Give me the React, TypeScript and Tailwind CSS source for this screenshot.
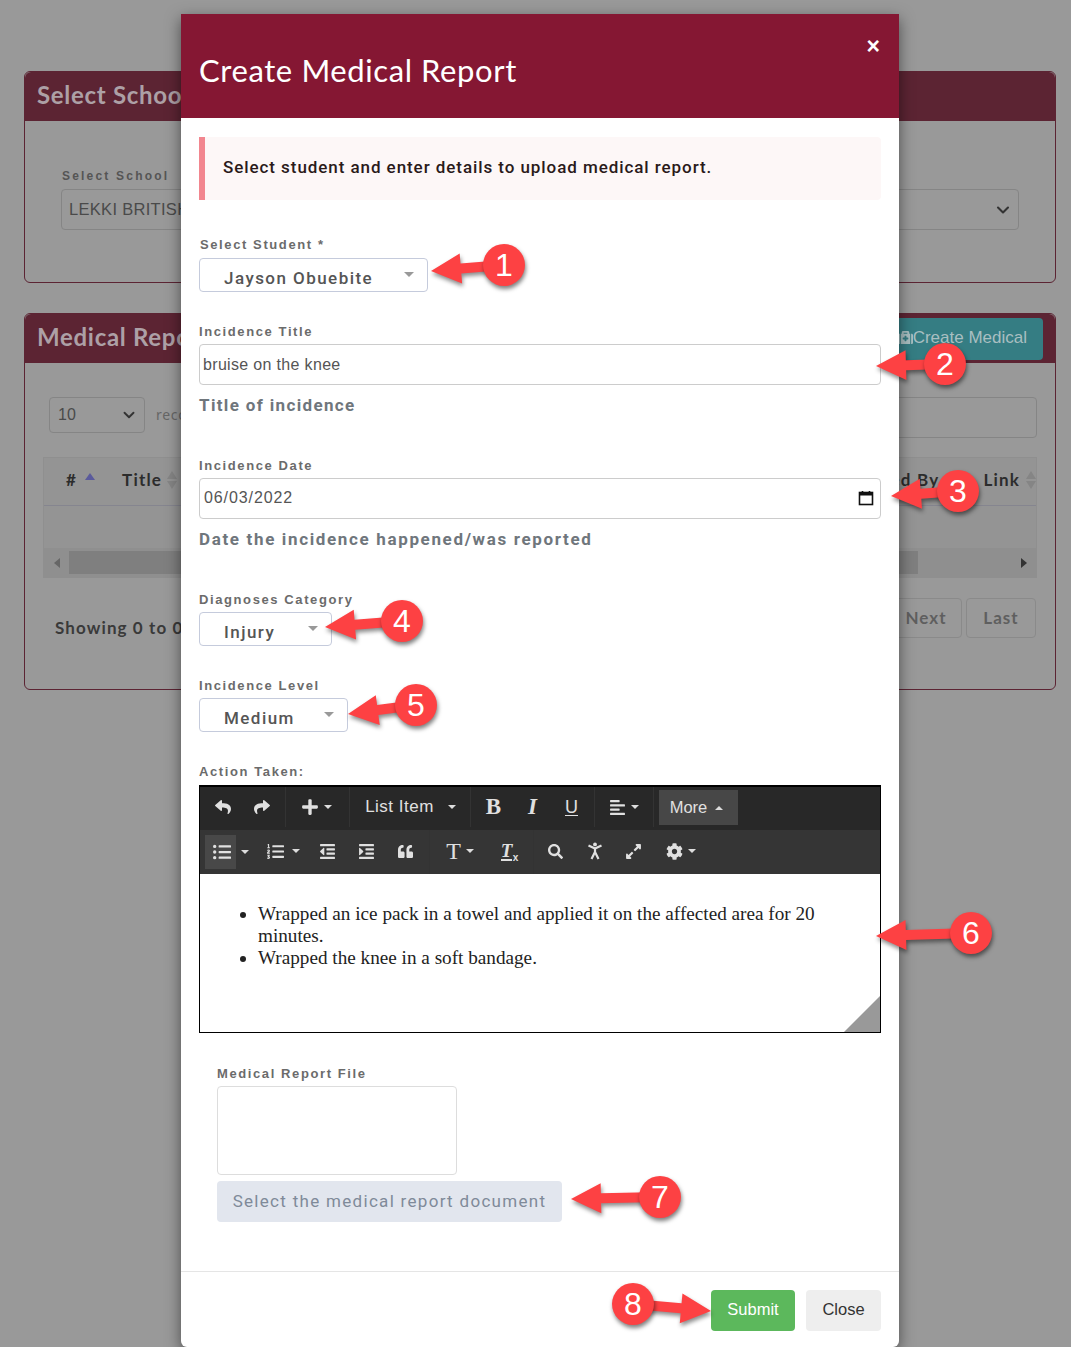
import type { ReactNode } from 'react';
import { ChevronDown } from 'lucide-react';
import {
  FaAlignLeft,
  FaCog,
  FaExpandAlt,
  FaIndent,
  FaListOl,
  FaListUl,
  FaMedkit,
  FaOutdent,
  FaPlus,
  FaQuoteLeft,
  FaReply,
  FaSearch,
  FaShare,
} from 'react-icons/fa';

const callouts = [
  { n: '1', tipX: 431, tipY: 271, cx: 504, cy: 265 },
  { n: '2', tipX: 876, tipY: 366, cx: 945, cy: 364 },
  { n: '3', tipX: 891, tipY: 496, cx: 958, cy: 491 },
  { n: '4', tipX: 325, tipY: 627, cx: 402, cy: 621 },
  { n: '5', tipX: 348, tipY: 714, cx: 416, cy: 705 },
  { n: '6', tipX: 876, tipY: 936, cx: 971, cy: 933 },
  { n: '7', tipX: 571, tipY: 1199, cx: 660, cy: 1197 },
  { n: '8', tipX: 711, tipY: 1311, cx: 633, cy: 1304 },
];

function arrowPoints(tipX: number, tipY: number, cx: number, cy: number) {
  const len = Math.hypot(cx - tipX, cy - tipY);
  const ux = (cx - tipX) / len;
  const uy = (cy - tipY) / len;
  const at = (along: number, side: number) =>
    `${tipX + ux * along - uy * side},${tipY + uy * along + ux * side}`;
  return [at(0, 0), at(30, 15), at(30, 5), at(len, 5), at(len, -5), at(30, -5), at(30, -15)].join(' ');
}

function Callouts() {
  return (
    <>
      <svg className="absolute left-0 top-0 drop-shadow-[1px_3px_2px_rgba(0,0,0,0.45)]" width="1071" height="1347">
        {callouts.map((c) => (
          <polygon key={c.n} points={arrowPoints(c.tipX, c.tipY, c.cx, c.cy)} fill="#fd4143" />
        ))}
      </svg>
      {callouts.map((c) => (
        <div
          key={c.n}
          className="absolute flex h-[42px] w-[42px] items-center justify-center rounded-full bg-[#fd4143] text-[32px] text-white shadow-[1px_3px_4px_rgba(0,0,0,0.5)] [font-family:'Liberation_Sans',sans-serif]"
          style={{ left: c.cx - 21, top: c.cy - 21 }}
        >
          {c.n}
        </div>
      ))}
    </>
  );
}

function SortIcons() {
  return (
    <span className="flex flex-col gap-[2px]">
      <span className="h-0 w-0 border-x-[5px] border-b-[8px] border-x-transparent border-b-[#858585]" />
      <span className="h-0 w-0 border-x-[5px] border-t-[8px] border-x-transparent border-t-[#858585]" />
    </span>
  );
}

function Background() {
  const head = "text-[24px] font-bold tracking-[0.7px] text-[#ada0a6] [font-family:Lato,sans-serif]";
  return (
    <div className="pl-6 pr-[15px] pt-[71px]">
      <div className="h-[212px] rounded-md border border-[#5c2433]">
        <div className="flex h-[49px] items-center rounded-t-md bg-[#5c2433] pb-1 pl-3">
          <span className={head}>Select School</span>
        </div>
        <div className="px-9 pt-[47px]">
          <div className="ml-px text-xs font-bold tracking-[2.2px] text-[#555] [font-family:'Liberation_Sans',sans-serif]">Select School</div>
          <div className="mt-[5px] flex h-[41px] w-[958px] items-center justify-between rounded border border-[#858585] pl-[7px] pr-[5px] text-[16.5px] tracking-[0.3px] text-[#4a4a4a] [font-family:'Liberation_Sans',sans-serif]">
            LEKKI BRITISH
            <ChevronDown size={20} strokeWidth={2.5} className="text-[#333]" />
          </div>
        </div>
      </div>
      <div className="mt-[30px] h-[377px] rounded-md border border-[#5c2433]">
        <div className="flex h-[49px] items-center justify-between rounded-t-md bg-[#5c2433] pl-3 pr-3">
          <span className={`${head} pb-1`}>Medical Reports</span>
          <div className="flex h-[42px] w-[153px] items-center justify-end rounded bg-[#357d83] pb-[2px] pr-4 text-[17px] text-[#a9bfc1] [font-family:'Liberation_Sans',sans-serif]">
            <FaMedkit size={15} />
            Create Medical
          </div>
        </div>
        <div className="px-[18px] pt-[34px]">
          <div className="flex items-start justify-between pl-1.5">
            <div className="flex items-center gap-[11px]">
              <div className="flex h-9 w-24 items-center justify-between rounded border border-[#858585] pl-2 pr-1.5 text-[16px] text-[#4a4a4a] [font-family:'Liberation_Sans',sans-serif]">
                10
                <ChevronDown size={18} strokeWidth={2.5} className="text-[#333]" />
              </div>
              <span className="text-sm tracking-wider text-[#666]">records</span>
            </div>
            <div className="h-[41px] w-[300px] rounded border border-[#858585]" />
          </div>
          <div className="mt-[19px] h-[121px] w-[994px] border border-[#8f8f8f] bg-[#949494]">
            <div className="flex h-[48px] items-center justify-between border-b border-[#85858f] pb-[3px] pl-[22px] pr-0 text-[17px] font-bold tracking-[1.2px] text-[#2c2c2c] [font-family:Lato,sans-serif]">
              <span className="flex items-center gap-[27px]">
                <span className="flex items-center gap-[8px]">
                  #
                  <span className="mb-2 h-0 w-0 border-x-[5px] border-b-[7px] border-x-transparent border-b-[#5a5a9c]" />
                </span>
                <span className="flex items-center gap-[5px]">Title <SortIcons /></span>
              </span>
              <span className="flex items-center gap-[44px]">
                <span>Uploaded By</span>
                <span className="flex items-center gap-[6px]">Link <SortIcons /></span>
              </span>
            </div>
            <div className="h-[42px]" />
            <div className="flex h-[29px] items-center bg-[#8f8f8f]">
              <span className="flex w-[25px] justify-center">
                <span className="h-0 w-0 border-y-[5px] border-r-[6px] border-y-transparent border-r-[#666]" />
              </span>
              <div className="h-[23px] w-[849px] bg-[#7f7f7f]" />
              <span className="ml-auto flex w-[25px] justify-center">
                <span className="h-0 w-0 border-y-[5px] border-l-[6px] border-y-transparent border-l-[#333]" />
              </span>
            </div>
          </div>
          <div className="mt-5 flex items-start justify-between pl-3 pr-px">
            <span className="pt-[17px] text-[17px] font-bold tracking-[1.1px] text-[#3a3a3a] [font-family:Lato,sans-serif]">Showing 0 to 0</span>
            <div className="flex gap-1 text-[17px] font-bold tracking-[1px] text-[#5f5f5f] [font-family:Lato,sans-serif]">
              <span className="flex h-10 w-[76px] items-center justify-center rounded-sm border border-[#8a8a8a] pl-1">Next</span>
              <span className="flex h-10 w-[70px] items-center justify-center rounded-sm border border-[#8a8a8a]">Last</span>
            </div>
          </div>
        </div>
      </div>
    </div>
  );
}

function Label({ children, className = '' }: { children: ReactNode; className?: string }) {
  return (
    <div className={`text-[13px] font-bold leading-[14px] tracking-[1.6px] text-[#6b6b6b] [font-family:'Liberation_Sans',sans-serif] ${className}`}>
      {children}
    </div>
  );
}

function SelectButton({ value, width }: { value: string; width: string }) {
  return (
    <div className={`relative flex h-[34px] items-center rounded border border-[#c5cbdc] pl-6 pt-2 text-[17px] font-medium tracking-[1.45px] text-[#555] [font-family:Roboto,sans-serif] ${width}`}>
      {value}
      <span className="absolute right-[13px] top-[13px] h-0 w-0 border-x-[5px] border-t-[5px] border-x-transparent border-t-[#999]" />
    </div>
  );
}

function HelpText({ children, className }: { children: ReactNode; className: string }) {
  return <div className={`text-[17px] font-bold leading-5 text-[#6f767c] [font-family:Roboto,sans-serif] ${className}`}>{children}</div>;
}

function Caret() {
  return <span className="h-0 w-0 border-x-[4px] border-t-[4px] border-x-transparent border-t-[#ddd]" />;
}

function Tool({ children, className = 'w-[39px]' }: { children: ReactNode; className?: string }) {
  return <div className={`flex h-full shrink-0 items-center justify-center gap-[5px] text-[#e0e0e0] ${className}`}>{children}</div>;
}

function Sep() {
  return <div className="h-full w-px shrink-0 bg-[#333]" />;
}

function Editor() {
  const serif = "[font-family:'Liberation_Serif',serif]";
  return (
    <div className="mt-[6px] h-[248px] w-[682px] border border-t-2 border-black">
      <div className="flex h-[43px] items-stretch bg-[#282828] pb-[3px] pl-[3px] pr-0">
        <Tool><FaReply size={16} /></Tool>
        <Tool><FaShare size={16} /></Tool>
        <div className="w-[4px]" />
        <Sep />
        <Tool className="w-[63px] pr-[3px]"><FaPlus size={18} /><Caret /></Tool>
        <Sep />
        <Tool className="w-[120px] pl-px text-[17px] tracking-[0.5px] [font-family:'Liberation_Sans',sans-serif]">
          <span className="mr-[9px]">List Item</span><Caret />
        </Tool>
        <Sep />
        <div className="w-[3px]" />
        <Tool><span className={`text-[23px] font-bold ${serif}`}>B</span></Tool>
        <Tool><span className={`text-[23px] font-bold italic ${serif}`}>I</span></Tool>
        <Tool><span className="text-[18px] underline underline-offset-2 [font-family:'Liberation_Sans',sans-serif]">U</span></Tool>
        <div className="w-[3px]" />
        <Sep />
        <Tool className="w-[58px]"><FaAlignLeft size={17} /><Caret /></Tool>
        <Sep />
        <div className="ml-[5px] mt-[3px] flex h-[35px] w-[79px] items-center justify-center gap-2 bg-[#474747] pr-1 text-[16.5px] text-[#e0e0e0] [font-family:'Liberation_Sans',sans-serif]">
          More
          <span className="h-0 w-0 border-x-[4px] border-b-[4px] border-x-transparent border-b-[#ddd]" />
        </div>
      </div>
      <div className="flex h-[44px] items-stretch bg-[#353535] pl-[5px]">
        <div className="my-[5px] flex w-[31px] items-center justify-center bg-[#484848] pl-[3px] text-[#e0e0e0]"><FaListUl size={18} /></div>
        <Tool className="w-[18px]"><Caret /></Tool>
        <Tool className="w-[54px] gap-[8px] pb-[2px] pl-[4px]"><FaListOl size={17} /><Caret /></Tool>
        <Tool className="w-[39px] pb-[2px]"><FaOutdent size={17} /></Tool>
        <Tool className="w-[39px] pb-[2px]"><FaIndent size={17} /></Tool>
        <Tool className="w-[39px] pb-[2px]"><FaQuoteLeft size={15} /></Tool>
        <div className="w-[4px]" />
        <Sep />
        <Tool className="w-[60px] pb-[2px]"><span className={`text-[24px] leading-none ${serif}`}>T</span><Caret /></Tool>
        <Tool className="w-[43px] pb-[2px] pr-[10px]">
          <span className={`relative border-b-2 border-[#e0e0e0] text-[19px] font-bold italic leading-[17px] ${serif}`}>
            T<span className="absolute -right-[6px] bottom-[-4px] text-[10px] not-italic leading-none [font-family:'Liberation_Sans',sans-serif]">x</span>
          </span>
        </Tool>
        <Sep />
        <div className="w-[2px]" />
        <Tool className="w-[39px] pb-[2px]"><FaSearch size={15} /></Tool>
        <Tool className="w-[39px] pb-[2px]">
          <svg width="16" height="18" viewBox="0 0 16 18" fill="none" stroke="currentColor" strokeWidth="2.2">
            <circle cx="8" cy="2.4" r="1.9" fill="currentColor" stroke="none" />
            <path d="M1.5 3.5 L8 6.5 L14.5 3.5 M8 6 V10.5 M8 10 L4.5 17 M8 10 L11.5 17" />
          </svg>
        </Tool>
        <Tool className="w-[39px] pb-[2px]"><FaExpandAlt size={17} /></Tool>
        <Tool className="w-[55px] pb-[2px]"><FaCog size={17} /><Caret /></Tool>
      </div>
      <div className={`relative h-[158px] overflow-hidden bg-white pl-[58px] pr-[60px] pt-[29px] text-[19.2px] leading-[22px] text-[#222] ${serif}`}>
        <ul className="list-disc">
          <li>Wrapped an ice pack in a towel and applied it on the affected area for 20 minutes.</li>
          <li>Wrapped the knee in a soft bandage.</li>
        </ul>
        <div className="absolute bottom-0 right-0 h-0 w-0 border-b-[36px] border-l-[36px] border-b-[#999] border-l-transparent" />
      </div>
    </div>
  );
}

function Modal() {
  const input = "flex h-[41px] items-center justify-between rounded border border-[#ccc] text-[16px] text-[#555] [font-family:'Liberation_Sans',sans-serif]";
  return (
    <div className="absolute left-[181px] top-[14px] h-[1333px] w-[718px] rounded-b-md bg-white shadow-[0_5px_15px_rgba(0,0,0,0.5)]">
      <div className="relative flex h-[104px] items-center bg-[#851733] pl-[18px] pt-[8px]">
        <h1 className="text-[31px] font-normal tracking-[0.6px] text-white [font-family:Lato,sans-serif]">Create Medical Report</h1>
        <span className="absolute right-[19px] top-[20px] text-[23px] font-bold leading-6 text-white [font-family:'Liberation_Sans',sans-serif]">×</span>
      </div>
      <div className="px-[18px] pt-[19px]">
        <div className="flex h-[63px] items-center rounded-r border-l-[6px] border-[#f2868f] bg-[#fdf7f7] pb-[2px] pl-[18px] text-[17px] font-medium tracking-[0.93px] text-[#2a1a1a] [font-family:Roboto,sans-serif]">
          Select student and enter details to upload medical report.
        </div>
        <Label className="ml-px mt-[38px]">Select Student *</Label>
        <div className="mt-[6px]"><SelectButton value="Jayson Obuebite" width="w-[229px]" /></div>
        <Label className="mt-[33px]">Incidence Title</Label>
        <div className={`${input} mt-[5px] pl-[3px] tracking-[0.33px]`}>bruise on the knee</div>
        <div className="mt-[10px]"><HelpText className="tracking-[1.35px]">Title of incidence</HelpText></div>
        <Label className="mt-[44px]">Incidence Date</Label>
        <div className={`${input} mt-[5px] pb-[2px] pl-1 pr-[6px] tracking-[0.9px]`}>
          06/03/2022
          <svg width="16" height="16" viewBox="0 0 16 16" fill="none">
            <rect x="1.5" y="2.5" width="13" height="12" stroke="#111" strokeWidth="1.6" />
            <rect x="1.5" y="2.5" width="13" height="3" fill="#111" />
            <path d="M4.5 1V3M11.5 1V3" stroke="#111" strokeWidth="1.6" />
          </svg>
        </div>
        <div className="mt-[10px]"><HelpText className="tracking-[1.65px]">Date the incidence happened/was reported</HelpText></div>
        <Label className="mt-[44px]">Diagnoses Category</Label>
        <div className="mt-[5px]"><SelectButton value="Injury" width="w-[133px]" /></div>
        <Label className="mt-[33px]">Incidence Level</Label>
        <div className="mt-[5px]"><SelectButton value="Medium" width="w-[149px]" /></div>
        <Label className="mt-[33px]">Action Taken:</Label>
        <Editor />
        <div className="pl-[18px] pt-[34px]">
          <Label>Medical Report File</Label>
          <div className="mt-[5px] h-[89px] w-[240px] rounded border border-[#ddd]" />
          <div className="mt-[6px] flex h-[41px] w-[345px] items-center justify-center rounded bg-[#e2e6ee] text-[17px] tracking-[1.3px] text-[#7f8a99] [font-family:Roboto,sans-serif]">
            Select the medical report document
          </div>
        </div>
      </div>
      <div className="absolute inset-x-0 bottom-0 flex h-[76px] justify-end gap-[11px] border-t border-[#e5e5e5] pr-[18px] pt-[18px] text-[16.5px] [font-family:'Liberation_Sans',sans-serif]">
        <div className="flex h-[41px] w-[84px] items-center justify-center rounded bg-[#5cb85c] pb-[2px] text-white">Submit</div>
        <div className="flex h-[41px] w-[75px] items-center justify-center rounded bg-[#eee] pb-[2px] text-[#333]">Close</div>
      </div>
    </div>
  );
}

export default function App() {
  return (
    <div className="relative h-[1347px] w-[1071px] overflow-hidden bg-[#999]">
      <Background />
      <Modal />
      <Callouts />
    </div>
  );
}
